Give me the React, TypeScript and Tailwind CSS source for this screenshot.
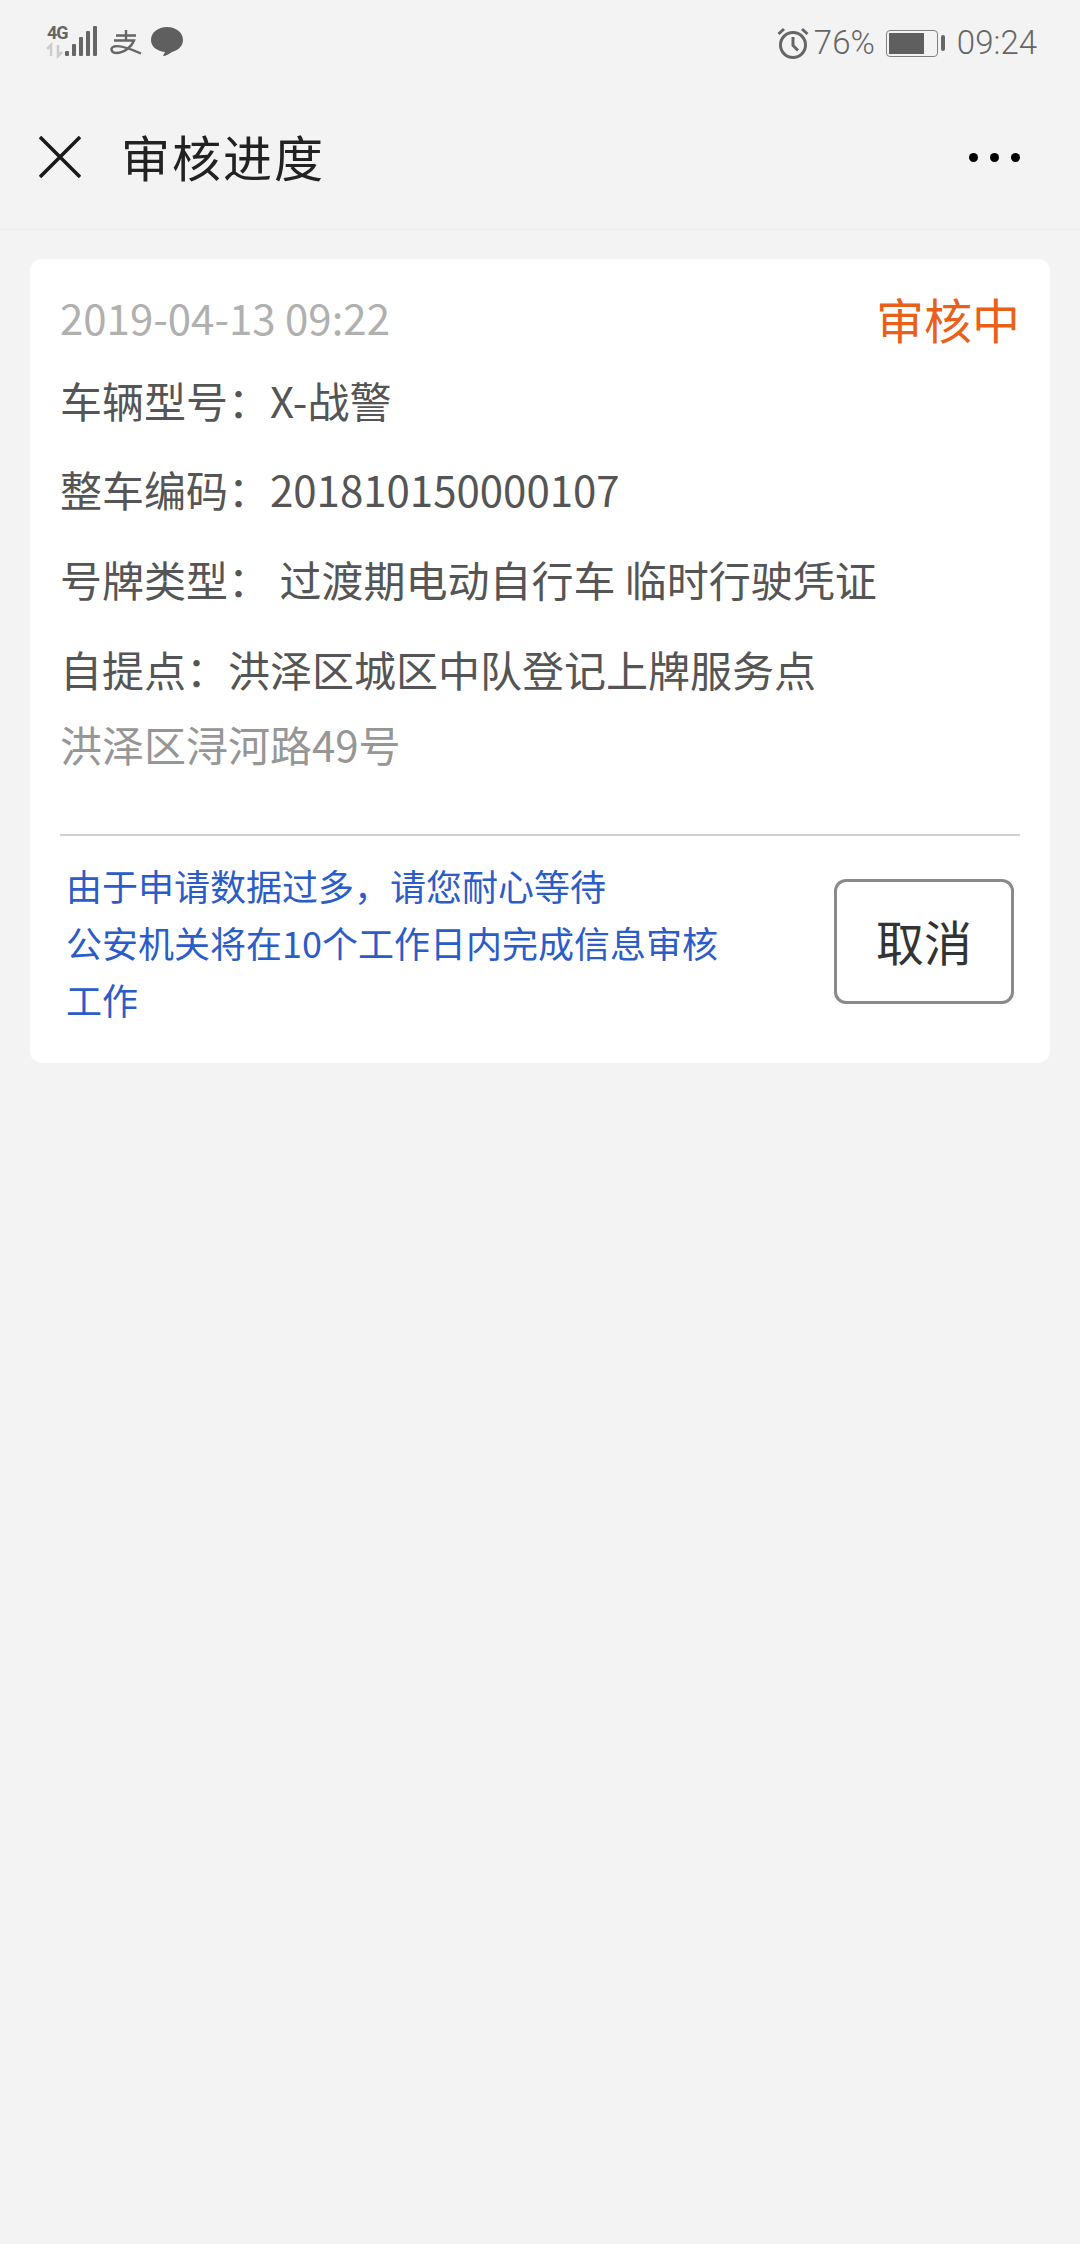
const cjk = "font-['Noto_Sans_CJK_SC','Noto_Sans',sans-serif]";

function StatusLeft() {
  return (
    <div className="relative w-[51px] h-[34px]">
      <span className="absolute left-[1px] top-[-1px] text-[18px] leading-[18px] font-bold text-[#666] font-['Roboto',sans-serif] tracking-[-1px]">4G</span>
      <svg width="51" height="34" viewBox="0 0 51 34" className="block">
        <path d="M5 31V20l-4 4M12 20v11l4-4" stroke="#ccc" strokeWidth="2.500" fill="none" />
        <rect x="19" y="26" width="4" height="5" rx="1" fill="#666" />
        <rect x="26" y="19" width="4" height="12" rx="1" fill="#666" />
        <rect x="33" y="12" width="4" height="19" rx="1" fill="#666" />
        <rect x="40" y="6" width="4" height="25" rx="1" fill="#666" />
        <rect x="47" y="1" width="4" height="30" rx="1" fill="#666" />
      </svg>
    </div>
  );
}

function StatusIcons() {
  return (
    <div className="flex items-center gap-[9px] ml-[13px]">
      <svg width="32" height="26" viewBox="0 0 32 26" fill="none" stroke="#666" strokeWidth="2.400">
        <path d="M6 6.500h20M16 1v10M4 11.500h20C22 17 15 24 6 24 1 24 0 19 4 17.500c6-2 16 2 27 7" />
      </svg>
      <svg width="32" height="30" viewBox="0 0 32 30" fill="#5f5f5f">
        <path d="M16 0c9 0 16 5.500 16 13 0 6-5 10.500-11 12-3 2-6 4-9 4l2-4C5 24 0 19 0 13 0 5.500 7 0 16 0z" />
      </svg>
    </div>
  );
}

function Alarm() {
  return (
    <svg width="32" height="32" viewBox="0 0 32 32" fill="none" stroke="#666" strokeWidth="3">
      <circle cx="16" cy="18" r="12.500" />
      <path d="M16 10v8.500l5 5" />
      <path d="M1.500 7 7 2M30.500 7 25 2" />
    </svg>
  );
}

function Battery() {
  return (
    <div className="flex items-center gap-[3px]">
      <div className="w-[52px] h-[27px] rounded-[4px] border-[1.5px] border-[#808080] p-[2px]">
        <div className="w-[35px] h-full bg-[#5f5f5f]" />
      </div>
      <div className="w-[4px] h-[16px] rounded-[2px] bg-[#666]" />
    </div>
  );
}

function Row({ children, className = "" }: { children: React.ReactNode; className?: string }) {
  return <div className={`text-[42px] leading-[56px] text-[#555] ${className}`}>{children}</div>;
}

export default function App() {
  return (
    <div className={`w-[1080px] h-[2244px] bg-[#f3f3f3] overflow-hidden ${cjk}`}>
      <div className="h-[86px] pt-[25px] pl-[46px] pr-[43px] flex items-start justify-between">
        <div className="flex items-center">
          <StatusLeft />
          <StatusIcons />
        </div>
        <div className="flex items-center text-[#666] text-[33px] leading-[36px] font-['Roboto',sans-serif] font-light">
          <Alarm />
          <span className="ml-[5px]">76%</span>
          <span className="ml-[11px]"><Battery /></span>
          <span className="ml-[12px]">09:24</span>
        </div>
      </div>
      <div className="h-[144px] border-b border-[#ececec] flex items-center pl-[39px] pr-[60px] pb-[4px]">
        <svg width="42" height="42" viewBox="0 0 42 42" stroke="#1a1a1a" strokeWidth="3.500" fill="none" className="mt-[2px]">
          <path d="M1 1l40 40M41 1L1 41" />
        </svg>
        <div className="ml-[40px] text-[49px] leading-[60px] text-[#222] tracking-[2px]">审核进度</div>
        <div className="ml-auto flex gap-[12px] mt-[4px]">
          <div className="w-[9px] h-[9px] rounded-full bg-black" />
          <div className="w-[9px] h-[9px] rounded-full bg-black" />
          <div className="w-[9px] h-[9px] rounded-full bg-black" />
        </div>
      </div>
      <div className="mx-[30px] mt-[29px] h-[804px] bg-white rounded-[12px] px-[30px] pt-[31px]">
        <div className="flex justify-between items-start">
          <div className="text-[42px] leading-[50px] text-[#b0b0b0] mt-[2px]">2019-04-13 09:22</div>
          <div className="text-[48px] leading-[56px] text-[#e8601a]">审核中</div>
        </div>
        <Row className="mt-[26px]">车辆型号：X-战警</Row>
        <Row className="mt-[33px]">整车编码：201810150000107</Row>
        <Row className="mt-[34px]">号牌类型：&nbsp;过渡期电动自行车 临时行驶凭证</Row>
        <Row className="mt-[34px]">自提点：洪泽区城区中队登记上牌服务点</Row>
        <Row className="mt-[19px] text-[#969696]">洪泽区浔河路49号</Row>
        <div className="mt-[62px] border-t-2 border-[#d2d2d2]" />
        <div className="flex justify-between items-start">
          <div className="w-[670px] pl-[6px] pt-[21px] text-[36px] leading-[57px] text-[#2b5cc8]">
            由于申请数据过多，请您耐心等待<br />公安机关将在10个工作日内完成信息审核工作
          </div>
          <div className="mt-[43px] mr-[6px] w-[180px] h-[125px] border-[3px] border-[#8a8a8a] rounded-[12px] flex items-center justify-center pb-[3px] text-[48px] text-[#333]">
            取消
          </div>
        </div>
      </div>
    </div>
  );
}
